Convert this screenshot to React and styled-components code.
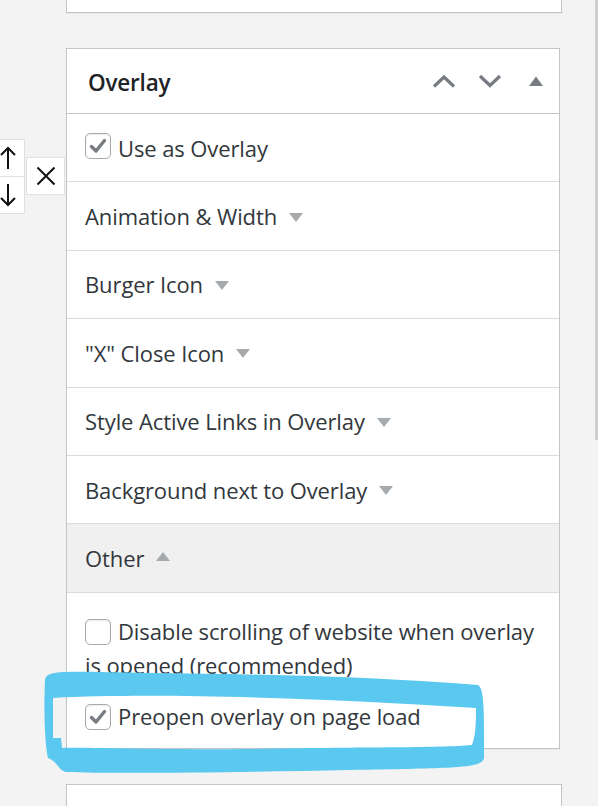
import React from 'react';
import styled, { createGlobalStyle } from 'styled-components';

const GlobalStyle = createGlobalStyle`
  html, body {
    margin: 0;
    background: #f3f3f3;
  }
  body {
    font-family: "Open Sans", "Noto Sans", sans-serif;
    color: #32373c;
    overflow: hidden;
  }
`;

const Page = styled.div`
  position: relative;
  width: 598px;
  height: 806px;
  overflow: hidden;
  padding-left: 66px;
  box-sizing: border-box;
  display: flex;
  flex-direction: column;
`;

const Stub = styled.div`
  width: 494px;
  height: 12px;
  flex: none;
  background: #fff;
  border: 1px solid #c3c4c7;
  border-top: none;
  box-shadow: 0 1px 1px rgba(0, 0, 0, 0.04);
  margin-top: ${p => p.$top || 0}px;
  margin-bottom: ${p => p.$bottom || 0}px;
`;

const NextPanel = styled(Stub)`
  height: 40px;
  border-top: 1px solid #c3c4c7;
  border-bottom: none;
`;

const Panel = styled.section`
  width: 494px;
  flex: none;
  box-sizing: border-box;
  background: #fff;
  border: 1px solid #c3c4c7;
  box-shadow: 0 1px 1px rgba(0, 0, 0, 0.04);
`;

const Header = styled.header`
  height: 64px;
  border-bottom: 1px solid #c3c4c7;
  display: flex;
  align-items: center;
  padding: 0 16px 0 21px;
`;

const Title = styled.h2`
  margin: 0;
  flex: 1;
  font-size: 22.5px;
  font-weight: 600;
  letter-spacing: -0.2px;
  color: #1d2327;
  padding-top: 2px;
`;

const HeaderTools = styled.div`
  display: flex;
  align-items: center;
  color: #787c82;
  & > svg + svg {
    margin-left: 22px;
  }
  & > svg:last-child {
    margin-left: 27px;
  }
`;

const Row = styled.div`
  height: 68.4px;
  box-sizing: border-box;
  border-bottom: 1px solid #dcdcde;
  display: flex;
  align-items: center;
  padding: 0 18px;
  font-size: 22px;
  letter-spacing: -0.1px;
  background: ${p => (p.$open ? '#f0f0f1' : '#fff')};
`;

const Caret = styled.span`
  display: inline-block;
  width: 0;
  height: 0;
  margin-left: 12px;
  border-left: 7px solid transparent;
  border-right: 7px solid transparent;
  ${p =>
    p.$up
      ? 'border-bottom: 9px solid #a7aaad; margin-top: -4px;'
      : 'border-top: 9px solid #a7aaad; margin-top: 2px;'}
`;

const Body = styled.div`
  padding: 21px 20px 15px 18px;
  display: flex;
  flex-direction: column;
  gap: 17px;
  font-size: 22px;
  letter-spacing: -0.1px;
  line-height: 34px;
`;

const Option = styled.label`
  display: block;
`;

const Box = styled.span`
  display: inline-flex;
  align-items: center;
  justify-content: center;
  width: 26px;
  height: 26px;
  box-sizing: border-box;
  border: 1px solid #a7aaad;
  border-radius: 5px;
  background: #fff;
  box-shadow: inset 0 1px 2px rgba(0, 0, 0, 0.08);
  vertical-align: middle;
  margin: -4px 7px 0 0;
  color: #787c82;
`;

const Floating = styled.div`
  position: absolute;
  left: 0;
  top: 139px;
  display: flex;
  align-items: flex-start;
  gap: 1px;
`;

const Mover = styled.div`
  margin-left: -9px;
  width: 32px;
  display: flex;
  flex-direction: column;
  background: #fff;
  border: 1px solid #e0e0e0;
`;

const MoveButton = styled.div`
  height: 36px;
  display: flex;
  align-items: center;
  justify-content: center;
  & + & {
    border-top: 1px solid #e0e0e0;
  }
`;

const Remove = styled.div`
  margin-top: 18px;
  width: 37px;
  height: 36px;
  display: flex;
  align-items: center;
  justify-content: center;
  background: #fff;
  border: 1px solid #e0e0e0;
`;

const Scrollbar = styled.div`
  position: absolute;
  right: 0;
  top: 0;
  width: 3px;
  height: 440px;
  background: #cfcfcf;
`;

const Highlight = styled.svg`
  position: absolute;
  left: 0;
  top: 0;
  pointer-events: none;
`;

const Check = ({ checked }) => (
  <Box>
    {checked && (
      <svg width="20" height="20" viewBox="0 0 20 20">
        <path d="M3.5 10.5 L8 15 L16.5 4.5" fill="none" stroke="currentColor" strokeWidth="3.4" strokeLinecap="round" strokeLinejoin="round" />
      </svg>
    )}
  </Box>
);

const Chevron = ({ up }) => (
  <svg width="24" height="14" viewBox="0 0 24 14">
    <polyline
      points={up ? '2,12.5 12,3 22,12.5' : '2,2 12,11.5 22,2'}
      fill="none"
      stroke="currentColor"
      strokeWidth="3.2"
    />
  </svg>
);

const sections = [
  'Animation & Width',
  'Burger Icon',
  '"X" Close Icon',
  'Style Active Links in Overlay',
  'Background next to Overlay',
];

export default function App() {
  return (
    <>
      <GlobalStyle />
      <Page>
        <Stub $bottom={35} />
        <Panel>
          <Header>
            <Title>Overlay</Title>
            <HeaderTools>
              <Chevron up />
              <Chevron />
              <svg width="14" height="10" viewBox="0 0 14 10">
                <polygon points="0,10 7,0.5 14,10" fill="currentColor" />
              </svg>
            </HeaderTools>
          </Header>
          <Row>
            <Check checked />
            Use as Overlay
          </Row>
          {sections.map(s => (
            <Row key={s}>
              {s}
              <Caret />
            </Row>
          ))}
          <Row $open>
            Other
            <Caret $up />
          </Row>
          <Body>
            <Option>
              <Check />
              Disable scrolling of website when overlay is opened (recommended)
            </Option>
            <Option>
              <Check checked />
              Preopen overlay on page load
            </Option>
          </Body>
        </Panel>
        <NextPanel $top={35} />

        <Floating>
          <Mover>
            <MoveButton>
              <svg width="16" height="24" viewBox="0 0 16 24">
                <path d="M8 23 V2 M1 9 L8 2 L15 9" fill="none" stroke="#111" strokeWidth="2" />
              </svg>
            </MoveButton>
            <MoveButton>
              <svg width="16" height="24" viewBox="0 0 16 24">
                <path d="M8 1 V22 M1 15 L8 22 L15 15" fill="none" stroke="#111" strokeWidth="2" />
              </svg>
            </MoveButton>
          </Mover>
          <Remove>
            <svg width="20" height="20" viewBox="0 0 20 20">
              <path d="M1.5 1.5 L18.5 18.5 M18.5 1.5 L1.5 18.5" stroke="#111" strokeWidth="2" />
            </svg>
          </Remove>
        </Floating>

        <Scrollbar />

        <Highlight width="598" height="806" viewBox="0 0 598 806">
          <path
            fillRule="evenodd"
            fill="#5bc8f0"
            d="M45 680 C 46 669, 70 672, 150 673 C 260 674, 380 677, 478 685 C 485 688, 484 720, 484 758 C 482 768, 460 768, 350 770 C 250 772, 120 774, 66 772 C 58 770, 58 762, 48 758 C 44 740, 44 700, 45 680 Z
               M53 698 C 150 693, 300 697, 476 708 C 476 720, 476 735, 472 745 C 440 748, 350 747, 250 749 C 150 750, 90 747, 62 748 L 61 738 L 53 738 Z"
          />
        </Highlight>
      </Page>
    </>
  );
}
